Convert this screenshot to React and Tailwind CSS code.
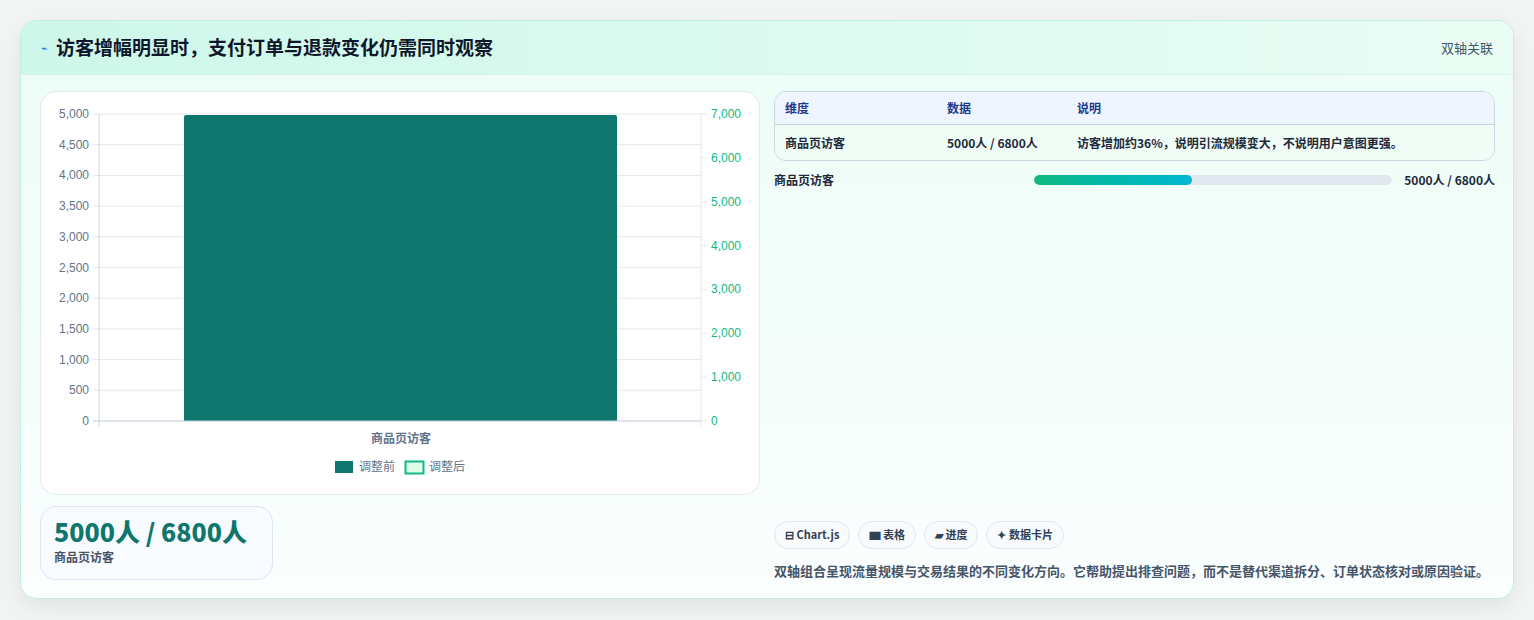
const F = { fontFamily: '"Noto Sans CJK SC", "Noto Sans", sans-serif' };

const Chart = () => {
  const x0 = 58, x1 = 660, yTop = 22, yBot = 329;
  const h = yBot - yTop;
  const left = [5000, 4500, 4000, 3500, 3000, 2500, 2000, 1500, 1000, 500, 0];
  const right = [7000, 6000, 5000, 4000, 3000, 2000, 1000, 0];
  return (
    <svg width="720" height="400" className="block">
      {left.map((v) => {
        const y = yBot - (v / 5000) * h;
        return (
          <g key={v}>
            <line x1={x0 - 6} x2={x1} y1={y} y2={y} stroke="#e5e7eb" />
            <text x={x0 - 10} y={y + 4} textAnchor="end" fontSize="12" fill="#64748b" fontFamily="Liberation Sans, sans-serif">{v.toLocaleString('en-US')}</text>
          </g>
        );
      })}
      {right.map((v) => {
        const y = yBot - (v / 7000) * h;
        return (
          <g key={v}>
            <line x1={x1} x2={x1 + 6} y1={y} y2={y} stroke="#e5e7eb" />
            <text x={x1 + 10} y={y + 4} fontSize="12" fill="#10b981" fontFamily="Liberation Sans, sans-serif">{v.toLocaleString('en-US')}</text>
          </g>
        );
      })}
      <line x1={x0} x2={x0} y1={yTop} y2={yBot + 6} stroke="#cbd5e1" />
      <line x1={x1} x2={x1} y1={yTop} y2={yBot + 6} stroke="#e5e7eb" />
      <path d={`M143 ${yBot} V${yTop + 3} a2 2 0 0 1 2 -2 H574 a2 2 0 0 1 2 2 V${yBot} Z`} fill="#0f766e" />
      <line x1={x0 - 6} x2={x1} y1={yBot} y2={yBot} stroke="#cbd5e1" />
      <text x="360" y="351" textAnchor="middle" fontSize="12" fill="#64748b" fontWeight="600" style={F}>商品页访客</text>
      <rect x="294" y="369" width="18" height="12" fill="#0f766e" />
      <text x="318" y="379" fontSize="12" fill="#64748b" style={F}>调整前</text>
      <rect x="364.5" y="369.5" width="18" height="12" fill="#dcfce7" stroke="#10b981" strokeWidth="2" />
      <text x="388" y="379" fontSize="12" fill="#64748b" style={F}>调整后</text>
    </svg>
  );
};

export default function App() {
  return (
    <div className="w-[1534px] h-[620px] bg-[#f3f5f5] pt-5 px-5" style={F}>
      <div className="w-[1494px] h-[579px] rounded-2xl border border-[#bfeee2] overflow-hidden bg-gradient-to-b from-[#ecfdf6] to-[#fafefe] shadow-[0_8px_24px_rgba(0,0,0,0.08)] flex flex-col">
        <div className="h-[56px] flex items-center justify-between px-5 bg-gradient-to-r from-[#cdf7ea] to-[#eafdf5] border-b border-[#d4f3ea]">
          <div className="flex items-center gap-2">
            <span className="text-[#2563eb] text-[11px]">⌁</span>
            <span className="text-[19px] font-bold text-[#0f172a]">访客增幅明显时，支付订单与退款变化仍需同时观察</span>
          </div>
          <span className="text-[13px] text-[#475569]">双轴关联</span>
        </div>
        <div className="flex-1 grid grid-cols-[720px_721px] gap-[14px] px-[19px] pt-4 pb-[18px]">
          <div className="flex flex-col gap-[11px]">
            <div className="h-[404px] bg-white rounded-2xl border border-[#e2e8f0] overflow-hidden">
              <Chart />
            </div>
            <div className="w-[233px] h-[74px] rounded-2xl border border-[#dbe5f3] bg-[#f8fbff] px-[13px] pt-[9px]">
              <div className="text-[25px] leading-[30px] font-extrabold text-[#0f766e]">5000人 / 6800人</div>
              <div className="text-[12px] text-[#475569] font-semibold mt-[2px]">商品页访客</div>
            </div>
          </div>
          <div className="flex flex-col">
            <div className="rounded-xl border border-[#cbd5e1] overflow-hidden text-[12px]">
              <div className="h-[33px] bg-[#eef5ff] flex items-center font-bold text-[#1e3a8a] border-b border-[#cbd5e1]">
                <span className="w-[172px] pl-[10px]">维度</span>
                <span className="w-[130px]">数据</span>
                <span>说明</span>
              </div>
              <div className="h-[35px] bg-[#f0fdf7] flex items-center font-semibold text-[#1e293b]">
                <span className="w-[172px] pl-[10px]">商品页访客</span>
                <span className="w-[130px]">5000人 / 6800人</span>
                <span>访客增加约36%，说明引流规模变大，不说明用户意图更强。</span>
              </div>
            </div>
            <div className="flex items-center mt-[10px] text-[12px] font-bold text-[#1e293b]">
              <span className="w-[260px]">商品页访客</span>
              <div className="w-[358px] h-[10px] rounded-full bg-[#e2e8f0] overflow-hidden">
                <div className="h-full w-[44%] rounded-full bg-gradient-to-r from-[#10b981] to-[#06b6d4]" />
              </div>
              <span className="ml-auto">5000人 / 6800人</span>
            </div>
            <div className="flex-1" />
            <div className="flex gap-[8px] text-[11px] font-bold text-[#334155]">
              <span className="h-[28px] px-[10px] rounded-full border border-[#e2e8f0] bg-[#f8fafc] flex items-center">⊟ Chart.js</span>
              <span className="h-[28px] px-[10px] rounded-full border border-[#e2e8f0] bg-[#f8fafc] flex items-center">▆ 表格</span>
              <span className="h-[28px] px-[10px] rounded-full border border-[#e2e8f0] bg-[#f8fafc] flex items-center">▰ 进度</span>
              <span className="h-[28px] px-[10px] rounded-full border border-[#e2e8f0] bg-[#f8fafc] flex items-center">✦ 数据卡片</span>
            </div>
            <div className="mt-[12px] text-[13px] font-semibold text-[#475569]">双轴组合呈现流量规模与交易结果的不同变化方向。它帮助提出排查问题，而不是替代渠道拆分、订单状态核对或原因验证。</div>
          </div>
        </div>
      </div>
    </div>
  );
}
